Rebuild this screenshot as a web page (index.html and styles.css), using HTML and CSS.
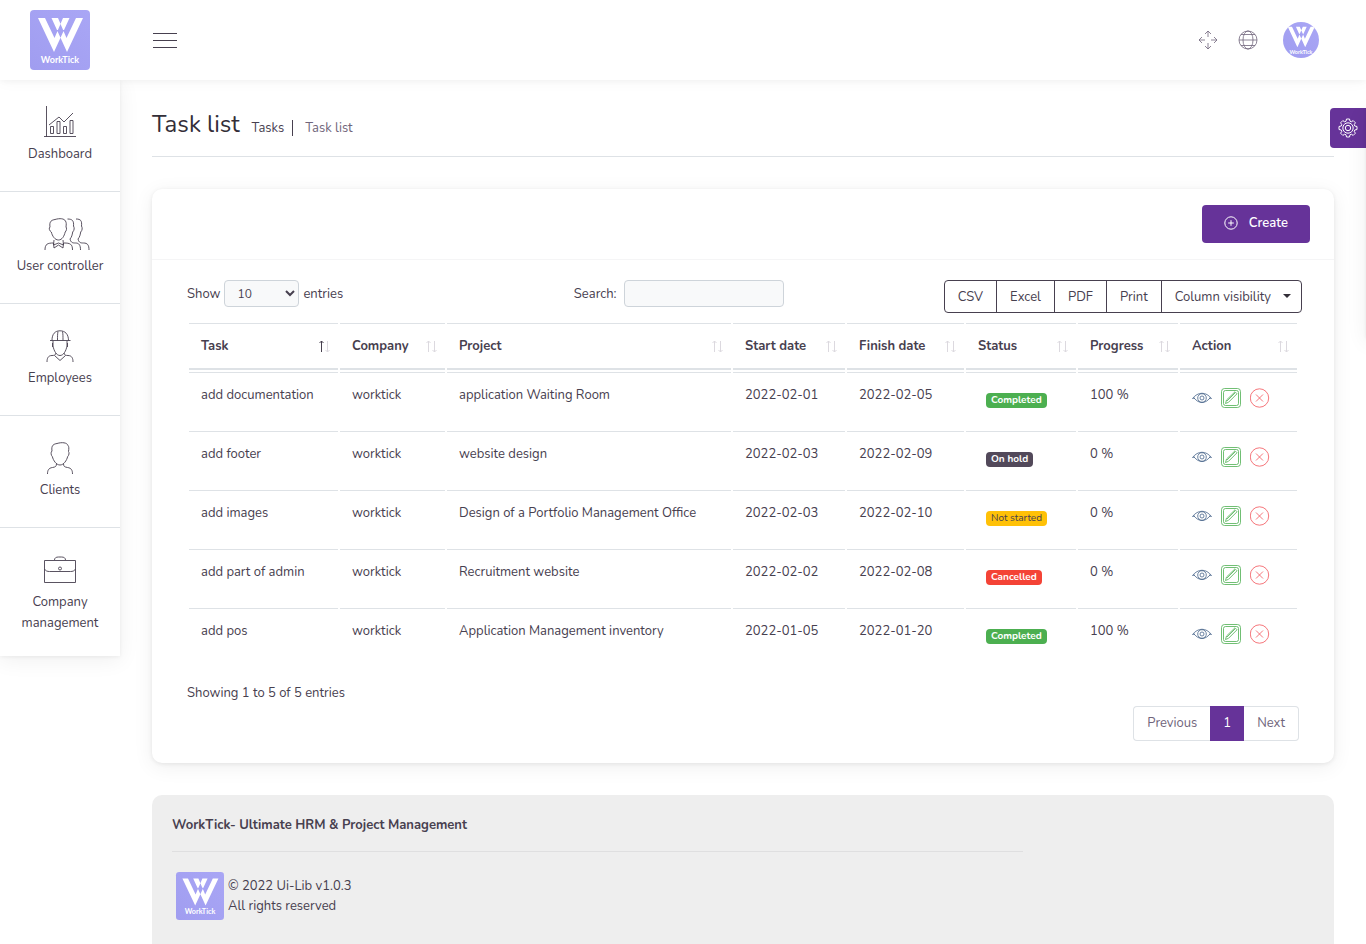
FILE: index.html
```html
<!DOCTYPE html>
<html lang="en">
<head>
<meta charset="utf-8">
<meta name="viewport" content="width=device-width, initial-scale=1">
<title>Task list</title>
<link rel="stylesheet" href="styles.css">
</head>
<body>
<svg class="sprite" aria-hidden="true">
  <defs>
    <linearGradient id="lilac" x1="1" y1="0" x2="0" y2="1"><stop offset="0" stop-color="#a9a6f5"/><stop offset="1" stop-color="#a09df0"/></linearGradient>
  </defs>
  <symbol id="logo" viewBox="0 0 60 60" overflow="visible">
    <rect width="60" height="60" rx="4" fill="url(#lilac)" stroke="none"/>
    <path fill="#fff" stroke="none" d="M8 8h7l9.500 20L33 8h6.500L24 42zM53 8h-7l-9.500 20L28 8h-6.500L37 42z"/>
    <path stroke="#a5a2f2" stroke-width="1" d="M26.500 20.500h2.500M32 20.500h2.500M30.500 18v5" fill="none"/>
    <text x="30" y="53" text-anchor="middle" class="logo-text">WorkTick</text>
  </symbol>
  <symbol id="chart" viewBox="0 0 32 32"><path d="M2.500 0v31M0 30.500h32M5 19l10-8 5 5 9-9M6.500 20.500h3v7h-3zM13 15.500h3v12h-3zM19.500 20.500h3v7h-3zM26 14.500h3v13h-3z"/></symbol>
  <symbol id="person" viewBox="0 0 32 32"><path d="M8 9C7 3 10 2 13 1.500c5-1.500 10-1 11 2 1 1 1 3 .5 6 1 1 .5 4-.8 5-1 4-4 8.500-7.700 8.500S9.300 18.500 8.300 14.500C7 13.500 6.500 10 8 9M12.500 21.500c0 3-1 3.500-4 4-4 .5-5 3-5 6.500M19.500 21.500c0 3 1 3.500 4 4 4 .5 5 3 5 6.500"/></symbol>
  <symbol id="users" viewBox="0 0 46 32"><path d="M6 9C5 3 8 2 11 1.500c5-1.500 9-1 10.500 1.500 1 2 .8 3 .5 6 1 1 .5 4-.8 5-1 4-3 8-6.700 8s-6.200-4-7.200-8C5.500 13 4.500 10 6 9M10 22l-.500 5 5-2 5 2-.500-5M10 30l4.500-3 4.500 3 .500-5M10 30l-.500-5c-6 0-8.500 1-8.500 7M20 25c6 0 8.500 1 8.500 7M23.500 1c5 0 6.500 2 6 7 1 2 1 4-.8 6-.5 3-1 5-2.700 7 1 4 3 4 5.500 4 3.500 0 5 2 5 7M32 1c5 0 6 2 5.500 7 1 2 1 4-.8 6-.5 3-1 5-2.700 7 1 4 3 4 5.500 4 4 0 5.500 2 5.500 7"/></symbol>
  <symbol id="worker" viewBox="0 0 32 32"><path d="M6 10.500h20.500M8 10.500C8 4 11 .8 16 .8s8.500 3.200 8.500 9.700M13.500 10.500c0-4 0-7 .5-9M19 10.500c0-4 0-7-.5-9M9 11v5c1 5 3.500 9.500 7 9.500s6-4.500 7-9.500v-5M8.500 13v4M23.500 13v4M12 23c0 2-2 2.500-4 2.500-4 0-5 3-5 6.500M20 23c0 2 2 2.500 4 2.500 4 0 5 3 5 6.500M10.500 25.500l5.500 5 5.500-5"/></symbol>
  <symbol id="briefcase" viewBox="0 0 32 32"><path d="M.5 6.500h31v22H.5zM.5 15c1 2 3 2.500 5 2.500h21c2 0 4-.5 5-2.500M10.500 6c0-2 1.500-3 4-3h3c2.500 0 4 1 4 3"/><circle cx="16" cy="14.500" r="1.500"/></symbol>
  <symbol id="arrows" viewBox="0 0 20 20"><path d="M10 7V1M7 4l3-3 3 3M10 13v6M7 16l3 3 3-3M7 10H1M4 7l-3 3 3 3M13 10h6M16 7l3 3-3 3"/></symbol>
  <symbol id="globe" viewBox="0 0 20 20"><circle cx="10" cy="10" r="9"/><ellipse cx="10" cy="10" rx="5" ry="9"/><path d="M1 10h18M3 15.500h14M3 4.500h14"/></symbol>
  <symbol id="gear" viewBox="0 0 20 20"><path d="M8.500 1h3l.5 2.200 1.300.6L15.200 2.600l2.200 2.200-1.200 1.900.6 1.300 2.200.5v3l-2.200.5-.6 1.300 1.200 1.900-2.200 2.200-1.900-1.200-1.300.6-.5 2.200h-3L8 16.800l-1.300-.6-1.900 1.200-2.200-2.200 1.200-1.900-.6-1.300L1 11.500v-3L3.200 8l.6-1.300-1.200-1.900 2.200-2.200 1.900 1.200L8 3.200z"/><circle cx="10" cy="10" r="5.200"/><circle cx="10" cy="10" r="2.700"/></symbol>
  <symbol id="plus" viewBox="0 0 14 14"><circle cx="7" cy="7" r="6.200"/><path d="M7 4.200v5.600M4.200 7h5.600"/></symbol>
  <symbol id="sort" viewBox="0 0 14 14"><path class="up" d="M3.500 13V2M1.500 4l2-2 2 2"/><path class="down" d="M9.500 2v11M7.500 11l2 2 2-2"/></symbol>
  <symbol id="eye" viewBox="0 0 20 20"><path d="M.5 10.500C6 3.500 14 3.500 19.500 10.500M2 10c5 6 11 6 16 0M.5 10.500 3 10M19.500 10.500 17 10"/><circle cx="10" cy="10" r="4.300"/><circle cx="10" cy="10" r="2"/></symbol>
  <symbol id="edit" viewBox="0 0 20 20"><rect x=".5" y=".5" width="19" height="19" rx="3"/><rect x="2.500" y="2.500" width="15" height="15" rx="2"/><path d="M4.500 15.500l1-3.500L14 3.800l2 2-8.500 8.500zM6 13l8-8"/></symbol>
  <symbol id="cross" viewBox="0 0 20 20"><circle cx="9.500" cy="10" r="9.200"/><path d="M6 6.500l7 7M13 6.500l-7 7"/></symbol>
</svg>

<header class="topbar">
  <a class="brand" href="#" aria-label="WorkTick"><svg><use href="#logo"/></svg></a>
  <button class="menu-toggle" aria-label="Toggle menu"><span></span><span></span><span></span></button>
  <div class="top-actions">
    <button class="icon-button" aria-label="Full screen"><svg><use href="#arrows"/></svg></button>
    <button class="icon-button" aria-label="Language"><svg><use href="#globe"/></svg></button>
    <button class="avatar" aria-label="Account"><svg><use href="#logo"/></svg></button>
  </div>
</header>

<div class="layout">
  <nav class="sidebar">
    <a href="#"><svg><use href="#chart"/></svg>Dashboard</a>
    <a href="#"><svg class="wide"><use href="#users"/></svg>User controller</a>
    <a href="#"><svg><use href="#worker"/></svg>Employees</a>
    <a href="#"><svg><use href="#person"/></svg>Clients</a>
    <a href="#"><svg><use href="#briefcase"/></svg>Company management</a>
  </nav>

  <main class="content">
    <div class="breadcrumb">
      <h1>Task list</h1>
      <a href="#">Tasks</a>
      <span>Task list</span>
    </div>

    <section class="card">
      <div class="card-head">
        <button class="create"><svg><use href="#plus"/></svg>Create</button>
      </div>
      <div class="toolbar">
        <div class="field"><label for="length">Show</label>
          <select id="length"><option>10</option><option>25</option><option>50</option></select>
          <label for="length">entries</label></div>
        <div class="field search"><label for="search">Search:</label><input id="search" type="search"></div>
        <div class="export">
          <button>CSV</button><button>Excel</button><button>PDF</button><button>Print</button><button class="caret">Column visibility</button>
        </div>
      </div>
      <div class="table-wrap">
        <table>
          <colgroup><col class="c-task"><col class="c-company"><col class="c-project"><col class="c-start"><col class="c-finish"><col class="c-status"><col class="c-progress"><col class="c-action"></colgroup>
          <thead>
            <tr>
              <th class="sorted"><div>Task<svg><use href="#sort"/></svg></div></th>
              <th><div>Company<svg><use href="#sort"/></svg></div></th>
              <th><div>Project<svg><use href="#sort"/></svg></div></th>
              <th><div>Start date<svg><use href="#sort"/></svg></div></th>
              <th><div>Finish date<svg><use href="#sort"/></svg></div></th>
              <th><div>Status<svg><use href="#sort"/></svg></div></th>
              <th><div>Progress<svg><use href="#sort"/></svg></div></th>
              <th><div>Action<svg><use href="#sort"/></svg></div></th>
            </tr>
          </thead>
          <tbody>
            <tr><td>add documentation</td><td>worktick</td><td>application Waiting Room</td><td>2022-02-01</td><td>2022-02-05</td><td class="status"><span class="badge green">Completed</span></td><td>100 %</td>
              <td class="actions"><div><a class="view" href="#" aria-label="View"><svg><use href="#eye"/></svg></a><a class="edit" href="#" aria-label="Edit"><svg><use href="#edit"/></svg></a><a class="delete" href="#" aria-label="Delete"><svg><use href="#cross"/></svg></a></div></td></tr>
            <tr><td>add footer</td><td>worktick</td><td>website design</td><td>2022-02-03</td><td>2022-02-09</td><td class="status"><span class="badge dark">On hold</span></td><td>0 %</td>
              <td class="actions"><div><a class="view" href="#" aria-label="View"><svg><use href="#eye"/></svg></a><a class="edit" href="#" aria-label="Edit"><svg><use href="#edit"/></svg></a><a class="delete" href="#" aria-label="Delete"><svg><use href="#cross"/></svg></a></div></td></tr>
            <tr><td>add images</td><td>worktick</td><td>Design of a Portfolio Management Office</td><td>2022-02-03</td><td>2022-02-10</td><td class="status"><span class="badge amber">Not started</span></td><td>0 %</td>
              <td class="actions"><div><a class="view" href="#" aria-label="View"><svg><use href="#eye"/></svg></a><a class="edit" href="#" aria-label="Edit"><svg><use href="#edit"/></svg></a><a class="delete" href="#" aria-label="Delete"><svg><use href="#cross"/></svg></a></div></td></tr>
            <tr><td>add part of admin</td><td>worktick</td><td>Recruitment website</td><td>2022-02-02</td><td>2022-02-08</td><td class="status"><span class="badge red">Cancelled</span></td><td>0 %</td>
              <td class="actions"><div><a class="view" href="#" aria-label="View"><svg><use href="#eye"/></svg></a><a class="edit" href="#" aria-label="Edit"><svg><use href="#edit"/></svg></a><a class="delete" href="#" aria-label="Delete"><svg><use href="#cross"/></svg></a></div></td></tr>
            <tr><td>add pos</td><td>worktick</td><td>Application Management inventory</td><td>2022-01-05</td><td>2022-01-20</td><td class="status"><span class="badge green">Completed</span></td><td>100 %</td>
              <td class="actions"><div><a class="view" href="#" aria-label="View"><svg><use href="#eye"/></svg></a><a class="edit" href="#" aria-label="Edit"><svg><use href="#edit"/></svg></a><a class="delete" href="#" aria-label="Delete"><svg><use href="#cross"/></svg></a></div></td></tr>
          </tbody>
        </table>
        <p class="info">Showing 1 to 5 of 5 entries</p>
        <nav class="pagination" aria-label="Pages">
          <a href="#">Previous</a><a class="current" href="#" aria-current="page">1</a><a href="#">Next</a>
        </nav>
      </div>
    </section>

    <footer class="footer">
      <p class="footer-title">WorkTick- Ultimate HRM &amp; Project Management</p>
      <div class="footer-info">
        <svg><use href="#logo"/></svg>
        <div><p>© 2022 Ui-Lib v1.0.3</p><p>All rights reserved</p></div>
      </div>
    </footer>
  </main>
</div>

<aside class="customizer">
  <button aria-label="Settings"><svg><use href="#gear"/></svg></button>
  <div class="panel"></div>
</aside>
</body>
</html>
```
FILE: styles.css
```css
* { box-sizing: border-box; }
body {
  margin: 0;
  background: #fff;
  color: #47404f;
  font: 13px/20px Nunito, "Open Sans", "Noto Sans", sans-serif;
  overflow-x: hidden;
}
h1, p { margin: 0; }
a { color: inherit; text-decoration: none; }
button, input, select { font: inherit; color: inherit; }
button { padding: 0; border: 0; background: none; cursor: pointer; }
svg { display: block; fill: none; stroke: currentColor; }
.sprite { position: absolute; width: 0; height: 0; }
.logo-text { font: 700 9px Lato, sans-serif; fill: #fff; stroke: none; }

.topbar {
  position: relative;
  z-index: 2;
  display: flex;
  align-items: center;
  height: 80px;
  padding: 0 47px 0 30px;
  background: #fff;
  box-shadow: 0 1px 15px rgba(0, 0, 0, .04), 0 1px 6px rgba(0, 0, 0, .04);
}
.brand svg { width: 60px; height: 60px; overflow: visible; }
.menu-toggle { display: grid; gap: 6px; width: 24px; margin-left: 63px; }
.menu-toggle span { height: 1px; background: #47404f; }
.top-actions { display: flex; align-items: center; margin-left: auto; }
.icon-button { margin-right: 20px; color: #70657b; }
.icon-button svg { width: 20px; height: 20px; stroke-width: .8; }
.avatar { margin-left: 5px; }
.avatar svg { width: 36px; height: 36px; border-radius: 50%; }

.layout { display: flex; align-items: flex-start; }
.sidebar {
  flex: 0 0 120px;
  background: #fff;
  box-shadow: 0 4px 20px 1px rgba(0, 0, 0, .06), 0 1px 4px rgba(0, 0, 0, .06);
}
.sidebar a {
  display: flex;
  flex-direction: column;
  align-items: center;
  gap: 6px;
  min-height: 112px;
  padding: 26px 12px 22px;
  border-bottom: 1px solid #dee2e6;
  line-height: 21px;
  text-align: center;
}
.sidebar a:last-child { border-bottom: 0; }
.sidebar svg { width: 32px; height: 32px; stroke-width: .9; }
.sidebar .wide { width: 46px; margin-left: 13px; }

.content { flex: 1; min-width: 0; padding: 26px 32px 0; }
.breadcrumb {
  display: flex;
  align-items: baseline;
  padding-bottom: 14px;
  border-bottom: 1px solid #dee2e6;
}
.breadcrumb h1 { font-size: 24px; font-weight: 400; line-height: 36px; color: #332e38; }
.breadcrumb a { margin-left: 12px; padding-right: 8px; line-height: 16px; border-right: 1px solid #47404f; }
.breadcrumb span { margin-left: 12px; color: #70657b; }

.card {
  margin-top: 32px;
  padding-bottom: 22px;
  border-radius: 10px;
  background: #fff;
  box-shadow: 0 4px 20px 1px rgba(0, 0, 0, .06), 0 1px 4px rgba(0, 0, 0, .08);
}
.card-head {
  display: flex;
  justify-content: flex-end;
  padding: 16px 24px;
  border-bottom: 1px solid #f5f5f6;
}
.create {
  display: flex;
  align-items: center;
  gap: 11px;
  height: 38px;
  padding: 0 22px 2px;
  border-radius: 4px;
  background: #639;
  color: #fff;
  font-weight: 600;
}
.create svg { width: 14px; height: 14px; }
.toolbar {
  display: grid;
  grid-template-columns: 386fr 370fr auto;
  align-items: start;
  padding: 20px 32px 8px 35px;
}
.field { display: flex; align-items: center; gap: 4px; }
.search { gap: 7px; }
.field select, .field input {
  height: 27px;
  border: 1px solid #ced4da;
  border-radius: 4px;
  background: #f8f9fa;
}
.field select { width: 75px; padding: 0 0 0 8px; font-size: 12px; }
.field input { width: 160px; padding: 0 8px; }
.export { display: flex; }
.export button {
  height: 33px;
  margin-left: -1px;
  padding: 0 13px;
  border: 1px solid #47404f;
}
.export button:first-child { border-radius: 4px 0 0 4px; }
.export button:last-child { border-radius: 0 4px 4px 0; }
.caret::after {
  content: "";
  display: inline-block;
  margin: 0 -3px 0 12px;
  vertical-align: 3px;
  border: 4px solid transparent;
  border-top-color: #332e38;
  border-bottom: 0;
}

.table-wrap { padding: 0 35px; }
table { width: 100%; table-layout: fixed; border-collapse: separate; border-spacing: 2px; }
.c-task { width: 149px; }
.c-company { width: 105px; }
.c-project { width: 284px; }
.c-start { width: 112px; }
.c-finish { width: 117px; }
.c-status { width: 110px; }
.c-progress { width: 100px; }
.c-action { width: 117px; }
th {
  padding: 12px 6px 12px 12px;
  border-top: 1px solid #dee2e6;
  border-bottom: 2px solid #dee2e6;
  font-weight: 700;
  text-align: left;
  white-space: nowrap;
}
th div { display: flex; align-items: center; justify-content: space-between; }
th svg { flex: none; width: 14px; height: 14px; color: #dcd9df; }
.sorted svg { --up: #47404f; }
.up { stroke: var(--up, currentColor); }
td {
  height: 57px;
  padding: 12px 0 12px 12px;
  border-top: 1px solid #dee2e6;
  vertical-align: top;
  white-space: nowrap;
}
.status { padding: 20px 0 0 20px; }
.badge {
  display: block;
  width: max-content;
  padding: 0 5px;
  border-radius: 4px;
  font-size: 10px;
  font-weight: 700;
  line-height: 15px;
  color: #fff;
}
.green { background: #4caf50; }
.dark { background: #52495a; }
.amber { background: #ffc107; color: #47404f; font-weight: 400; }
.red { background: #f44336; }
.actions { padding-top: 15px; }
.actions div { display: flex; gap: 9px; }
.actions svg { width: 20px; height: 20px; stroke-width: .8; }
.view { color: #47658a; }
.edit { color: #4caf50; }
.delete { color: #f2545b; }

.info { margin-top: 16px; }
.pagination { display: flex; justify-content: flex-end; margin-top: 3px; color: #70657b; }
.pagination a { padding: 6px 13px 7px; border: 1px solid #dee2e6; line-height: 20px; }
.pagination a:first-child { border-right: 0; border-radius: 4px 0 0 4px; }
.pagination a:last-child { border-left: 0; border-radius: 0 4px 4px 0; }
.pagination .current { padding: 6px 12px 7px; border-color: #639; background: #639; color: #fff; }

.footer {
  min-height: 149px;
  margin-top: 32px;
  padding: 20px;
  border-radius: 10px 10px 0 0;
  background: #eee;
}
.footer-title {
  width: calc(75% - 6px);
  padding-bottom: 16px;
  border-bottom: 1px solid #dfdfe0;
  font-weight: 700;
}
.footer-info { display: flex; align-items: center; gap: 4px; margin: 20px 0 0 4px; }
.footer-info svg { width: 48px; height: 48px; overflow: visible; }

.customizer { position: fixed; z-index: 3; top: 108px; right: -240px; display: flex; }
.customizer button {
  display: grid;
  place-items: center;
  width: 36px;
  height: 40px;
  border-radius: 4px 0 0 4px;
  background: #639;
  color: #fff;
}
.customizer button svg { width: 20px; height: 20px; }
.panel {
  width: 240px;
  height: 230px;
  background: #fff;
  box-shadow: 0 4px 20px 1px rgba(0, 0, 0, .06), 0 1px 4px rgba(0, 0, 0, .08);
}
```
